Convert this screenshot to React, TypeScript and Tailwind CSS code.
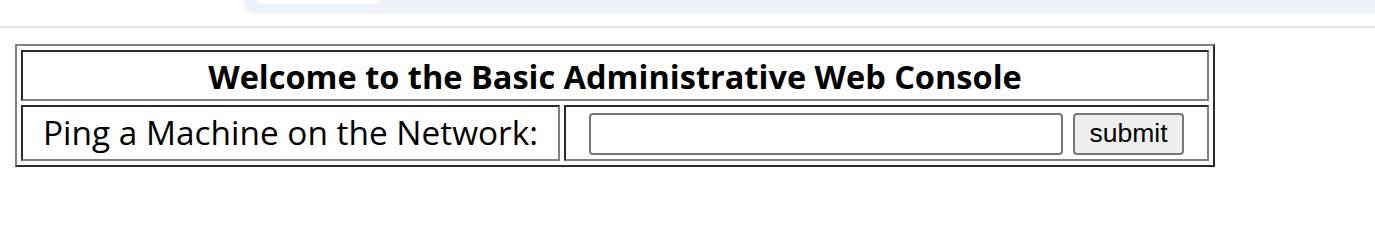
export default function App() {
  return (
    <div className="relative h-[247px] w-[1375px] overflow-hidden bg-white font-['Open_Sans',sans-serif] text-black">
      {/* browser chrome fragment */}
      <div className="h-[28px] border-b-2 border-[#e3e3e3]">
        <div className="ml-[243px] h-[14px] rounded-bl-[14px] bg-[#edf2fa] pl-[14px]">
          <div className="h-[4px] w-[122px] rounded-b-[6px] bg-white" />
        </div>
      </div>

      <table className="ml-[15px] mt-[16px] w-[1200px] border-separate border-spacing-[4px] border-2 border-t-[#808080] border-l-[#808080] border-r-[#2b2b2b] border-b-[#2b2b2b]">
        <tbody>
          <tr>
            <td
              colSpan={2}
              className="h-[51px] border-2 border-t-[#2b2b2b] border-l-[#2b2b2b] border-r-[#808080] border-b-[#808080] p-0 pt-[3px] text-center text-[32.5px] font-bold leading-none"
            >
              Welcome to the Basic Administrative Web Console
            </td>
          </tr>
          <tr>
            <td className="h-[56px] w-[539px] border-2 border-t-[#2b2b2b] border-l-[#2b2b2b] border-r-[#808080] border-b-[#808080] p-0 text-center text-[33.4px] leading-none">
              Ping a Machine on the Network:
            </td>
            <td className="h-[56px] border-2 border-t-[#2b2b2b] border-l-[#2b2b2b] border-r-[#808080] border-b-[#808080] p-0 pt-[1px]">
              <div className="flex items-center gap-[10px] pl-[23px]">
                <input
                  type="text"
                  className="h-[42px] w-[474px] rounded-[4px] border-2 border-[#767676] bg-white"
                />
                <button className="h-[42px] w-[111px] rounded-[4px] border-2 border-[#767676] bg-[#efefef] font-['Liberation_Sans',Arial,sans-serif] text-[26.5px] leading-none">
                  submit
                </button>
              </div>
            </td>
          </tr>
        </tbody>
      </table>
    </div>
  );
}
